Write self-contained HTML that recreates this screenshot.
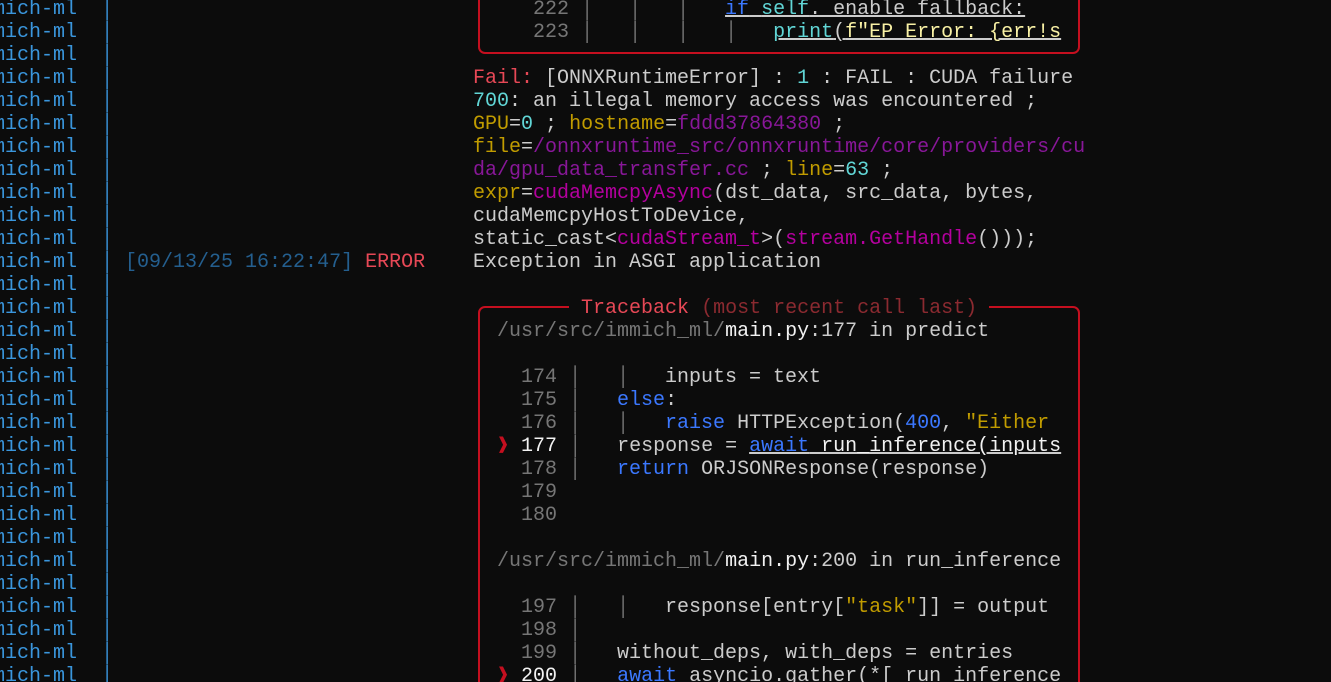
<!DOCTYPE html>
<html><head><meta charset="utf-8"><style>
html,body{margin:0;padding:0;background:#0c0c0c;width:1331px;height:682px;overflow:hidden;position:relative}
.r{position:absolute;white-space:pre;font-family:"Liberation Mono","DejaVu Sans Mono",monospace;font-size:20px;line-height:23px;color:#cccccc;height:23px;margin-top:2px}
.L{left:-31px;color:#3a96dd}
.c{left:473px}
.b{color:#3b78ff}.cy{color:#61d6d6}.y{color:#c19c00}.by{color:#f9f1a5}.p{color:#881798}.bp{color:#b4009e}
.br{color:#e74856}.g{color:#767676}.w{color:#f2f2f2}.u{text-decoration:underline}.dr{color:#8b2a30}.ts{color:#245f8f}
.ar{display:inline-block;width:12px;color:#c50f1f}
.box{position:absolute;border:2px solid #c50f1f;border-radius:7px;box-sizing:border-box}
</style></head><body>
<div class="box" style="left:478px;top:-30px;width:602px;height:84px"></div>
<div class="box" style="left:478px;top:306px;width:602px;height:420px"></div>
<div class="r" style="left:569px;top:295px;background:#0c0c0c;padding:0 0"> <span class="br">Traceback</span> <span class="dr">(most recent call last)</span> </div>

<div class="r L" style="top:-4px">immich-ml  │</div>
<div class="r L" style="top:19px">immich-ml  │</div>
<div class="r L" style="top:42px">immich-ml  │</div>
<div class="r L" style="top:65px">immich-ml  │</div>
<div class="r L" style="top:88px">immich-ml  │</div>
<div class="r L" style="top:111px">immich-ml  │</div>
<div class="r L" style="top:134px">immich-ml  │</div>
<div class="r L" style="top:157px">immich-ml  │</div>
<div class="r L" style="top:180px">immich-ml  │</div>
<div class="r L" style="top:203px">immich-ml  │</div>
<div class="r L" style="top:226px">immich-ml  │</div>
<div class="r L" style="top:249px">immich-ml  │ <span class="ts">[09/13/25 16:22:47]</span> <span class="br">ERROR</span></div>
<div class="r L" style="top:272px">immich-ml  │</div>
<div class="r L" style="top:295px">immich-ml  │</div>
<div class="r L" style="top:318px">immich-ml  │</div>
<div class="r L" style="top:341px">immich-ml  │</div>
<div class="r L" style="top:364px">immich-ml  │</div>
<div class="r L" style="top:387px">immich-ml  │</div>
<div class="r L" style="top:410px">immich-ml  │</div>
<div class="r L" style="top:433px">immich-ml  │</div>
<div class="r L" style="top:456px">immich-ml  │</div>
<div class="r L" style="top:479px">immich-ml  │</div>
<div class="r L" style="top:502px">immich-ml  │</div>
<div class="r L" style="top:525px">immich-ml  │</div>
<div class="r L" style="top:548px">immich-ml  │</div>
<div class="r L" style="top:571px">immich-ml  │</div>
<div class="r L" style="top:594px">immich-ml  │</div>
<div class="r L" style="top:617px">immich-ml  │</div>
<div class="r L" style="top:640px">immich-ml  │</div>
<div class="r L" style="top:663px">immich-ml  │</div>

<div class="r c" style="top:-4px"><span class="g">     222 │   │   │   </span><span class="u"><span class="b">if</span> <span class="cy">self</span>._enable_fallback:</span></div>
<div class="r c" style="top:19px"><span class="g">     223 │   │   │   │   </span><span class="u"><span class="cy">print</span>(<span class="by">f"EP Error: {err!s</span></span></div>
<div class="r c" style="top:65px"><span class="br">Fail:</span> [ONNXRuntimeError] : <span class="cy">1</span> : FAIL : CUDA failure</div>
<div class="r c" style="top:88px"><span class="cy">700</span>: an illegal memory access was encountered ;</div>
<div class="r c" style="top:111px"><span class="y">GPU</span>=<span class="cy">0</span> ; <span class="y">hostname</span>=<span class="p">fddd37864380</span> ;</div>
<div class="r c" style="top:134px"><span class="y">file</span>=<span class="p">/onnxruntime_src/onnxruntime/core/providers/cu</span></div>
<div class="r c" style="top:157px"><span class="p">da/gpu_data_transfer.cc</span> ; <span class="y">line</span>=<span class="cy">63</span> ;</div>
<div class="r c" style="top:180px"><span class="y">expr</span>=<span class="bp">cudaMemcpyAsync</span>(dst_data, src_data, bytes,</div>
<div class="r c" style="top:203px">cudaMemcpyHostToDevice,</div>
<div class="r c" style="top:226px">static_cast&lt;<span class="bp">cudaStream_t</span>&gt;(<span class="bp">stream.GetHandle</span>()));</div>
<div class="r c" style="top:249px">Exception in ASGI application</div>

<div class="r c" style="top:318px">  <span class="g">/usr/src/immich_ml/</span><span class="w">main.py</span>:177 in predict</div>
<div class="r c" style="top:364px"><span class="g">    174 │   │</span>   inputs = text</div>
<div class="r c" style="top:387px"><span class="g">    175 │</span>   <span class="b">else</span>:</div>
<div class="r c" style="top:410px"><span class="g">    176 │   │</span>   <span class="b">raise</span> HTTPException(<span class="b">400</span>, <span class="y">"Either</span></div>
<div class="r c" style="top:433px">  <span class="ar">❱</span> <span class="w">177</span> <span class="g">│</span>   response = <span class="u"><span class="b">await</span><span class="w"> run_inference(inputs</span></span></div>
<div class="r c" style="top:456px"><span class="g">    178 │</span>   <span class="b">return</span> ORJSONResponse(response)</div>
<div class="r c" style="top:479px"><span class="g">    179</span></div>
<div class="r c" style="top:502px"><span class="g">    180</span></div>
<div class="r c" style="top:548px">  <span class="g">/usr/src/immich_ml/</span><span class="w">main.py</span>:200 in run_inference</div>
<div class="r c" style="top:594px"><span class="g">    197 │   │</span>   response[entry[<span class="y">"task"</span>]] = output</div>
<div class="r c" style="top:617px"><span class="g">    198 │</span></div>
<div class="r c" style="top:640px"><span class="g">    199 │</span>   without_deps, with_deps = entries</div>
<div class="r c" style="top:663px">  <span class="ar">❱</span> <span class="w">200</span> <span class="g">│</span>   <span class="b">await</span> asyncio.gather(*[_run_inference</div>
</body></html>
